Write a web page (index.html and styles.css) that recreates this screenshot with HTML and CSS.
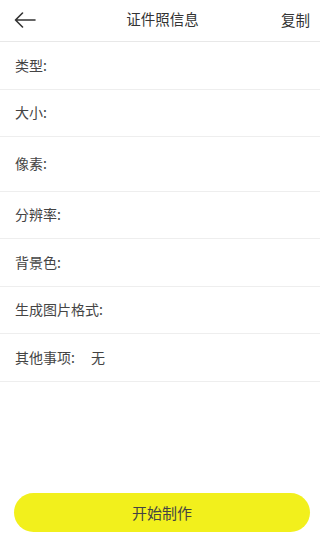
FILE: index.html
```html
<!DOCTYPE html>
<html lang="zh-CN">
<head>
<meta charset="utf-8">
<title>证件照信息</title>
<link rel="stylesheet" href="styles.css">
</head>
<body>
<div class="page">
  <header class="topbar">
    <span class="back">
      <svg width="22" height="16" viewBox="0 0 22 16" fill="none" stroke="#333" stroke-width="1.6" stroke-linecap="round" stroke-linejoin="round">
        <path d="M21 8H1.5M8.5 1L1.5 8l7 7"/>
      </svg>
    </span>
    <span class="title">证件照信息</span>
    <span class="copy">复制</span>
  </header>
  <ul class="info">
    <li class="row h47">类型:</li>
    <li class="row h46">大小:</li>
    <li class="row h54">像素:</li>
    <li class="row h46">分辨率:</li>
    <li class="row h47">背景色:</li>
    <li class="row h46">生成图片格式:</li>
    <li class="row h47">其他事项:<span class="val">无</span></li>
  </ul>
  <div class="spacer"></div>
  <div class="footer">
    <button class="start">开始制作</button>
  </div>
</div>
</body>
</html>
```

FILE: styles.css
```css
* { box-sizing: border-box; }
html, body { margin: 0; padding: 0; background: #fff; }
body {
  font-family: "Noto Sans CJK SC", "Noto Sans", sans-serif;
  color: #444;
}
.page {
  width: 320px;
  height: 546px;
  display: flex;
  flex-direction: column;
}
.topbar {
  height: 42px;
  border-bottom: 1px solid #e8e8e8;
  display: flex;
  align-items: center;
  justify-content: space-between;
  padding: 0 10px 0 14px;
  position: relative;
}
.back { display: flex; align-items: center; width: 24px; height: 20px; margin-top: -2px; }
.title {
  position: absolute;
  left: 5px; right: 0;
  text-align: center;
  font-size: 14.5px;
  color: #333;
  pointer-events: none;
  top: 9px;
  line-height: 20px;
}
.copy { font-size: 14.5px; color: #333; margin-top: -3px; }
.info { list-style: none; margin: 0; padding: 0; }
.row {
  display: flex;
  align-items: center;
  padding-left: 15px;
  font-size: 14px;
  color: #444;
  border-bottom: 1px solid #eeeeee;
  padding-bottom: 2px;
}
.h46 { height: 47px; }
.h47 { height: 48px; }
.h54 { height: 55px; }
.val { margin-left: 16px; }
.spacer { flex: 1; }
.footer { padding: 0 10px 14px 14px; }
.start {
  width: 296px;
  height: 39px;
  border: none;
  border-radius: 20px;
  background: #f2f01c;
  font-family: "Noto Sans CJK SC", "Noto Sans", sans-serif;
  font-size: 15px;
  color: #444;
  display: block;
  padding: 0 0 1px 0;
}
```
